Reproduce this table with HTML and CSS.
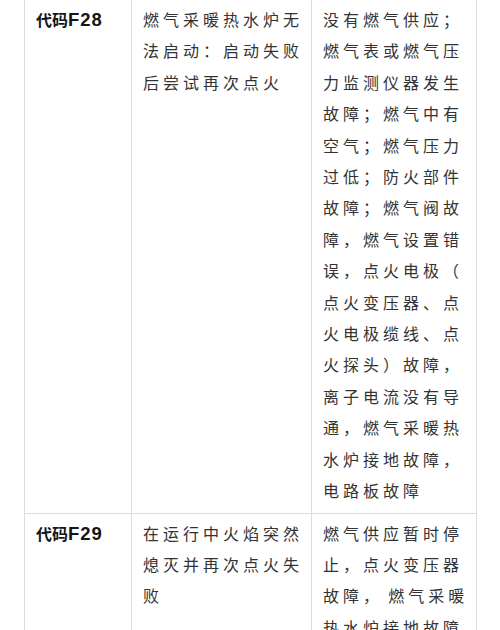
FILE: index.html
```html
<!DOCTYPE html>
<html lang="zh-CN">
<head>
<meta charset="utf-8">
<title>故障代码</title>
<link rel="stylesheet" href="styles.css">
</head>
<body>
<div class="table">
  <div class="row">
    <div class="cell code">代码<span class="num">F28</span></div>
    <div class="cell desc">燃气采暖热水炉无<br>法启动：启动失败<br>后尝试再次点火</div>
    <div class="cell cause">没有燃气供应；<br>燃气表或燃气压<br>力监测仪器发生<br>故障；燃气中有<br>空气；燃气压力<br>过低；防火部件<br>故障；燃气阀故<br>障，燃气设置错<br>误，点火电极（<br>点火变压器、点<br>火电极缆线、点<br>火探头）故障，<br>离子电流没有导<br>通，燃气采暖热<br>水炉接地故障，<br>电路板故障</div>
  </div>
  <div class="row">
    <div class="cell code">代码<span class="num">F29</span></div>
    <div class="cell desc">在运行中火焰突然<br>熄灭并再次点火失<br>败</div>
    <div class="cell cause">燃气供应暂时停<br>止，点火变压器<br>故障，&#8202;燃气采暖<br>热水炉接地故障</div>
  </div>
</div>
</body>
</html>
```

FILE: styles.css
```css
html, body {
  margin: 0;
  padding: 0;
  background: #ffffff;
}

body {
  font-family: "Liberation Sans", "Noto Sans CJK SC", sans-serif;
  color: #333333;
}

.table {
  margin-left: 24px;
  width: 453px;
}

.row {
  display: grid;
  grid-template-columns: 107px 180px 166px;
  border-bottom: 1px solid #dddddd;
}

.cell {
  border-left: 1px solid #dddddd;
  padding: 5px 4px 5px 11px;
  font-size: 16px;
  line-height: 31.4px;
  letter-spacing: 4px;
  white-space: nowrap;
}

.cause {
  border-right: 1px solid #dddddd;
}

.code {
  font-weight: bold;
  color: #161616;
  letter-spacing: 0;
}

.num {
  font-size: 18.5px;
  letter-spacing: 1px;
  line-height: 1;
}
```
